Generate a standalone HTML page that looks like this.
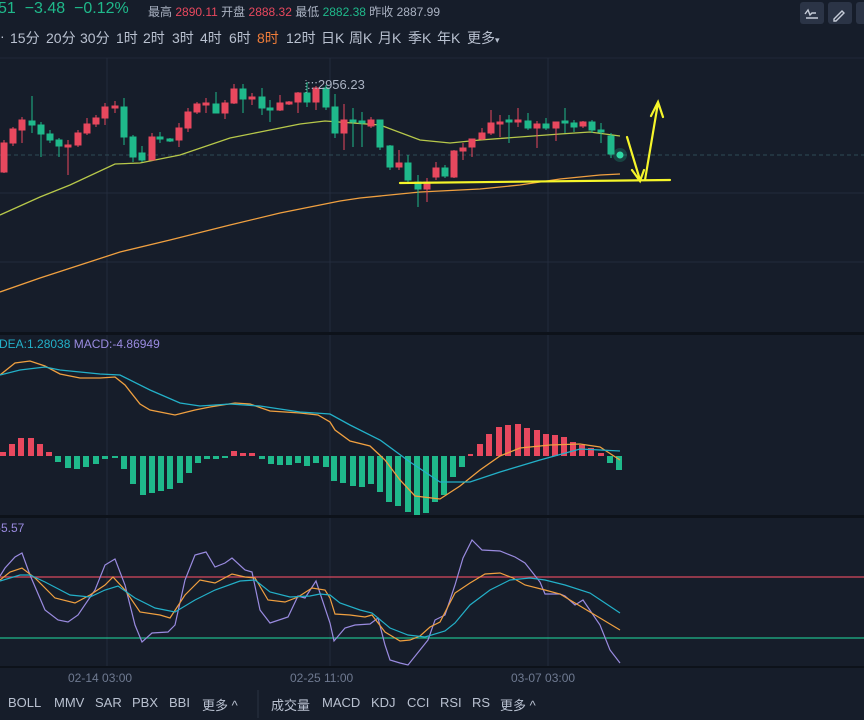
<!DOCTYPE html>
<html><head><meta charset="utf-8"><style>
body{margin:0;width:864px;height:720px;overflow:hidden;background:#161d2a;font-family:"Liberation Sans","Noto Sans CJK SC",sans-serif;position:relative}
.t{position:absolute;white-space:nowrap}
.btn{position:absolute;top:2px;width:24px;height:22px;background:#2b3446;border-radius:3px}
</style></head><body>
<div class="t" style="left:-2px;top:0;font-size:16px;color:#1fb98b">51 &nbsp;−3.48 &nbsp;−0.12%</div>
<div class="t" style="left:148px;top:3px;font-size:12px;color:#aab2c2">最高 <span style="color:#e8485e">2890.11</span> 开盘 <span style="color:#e8485e">2888.32</span> 最低 <span style="color:#1fb98b">2882.38</span> 昨收 2887.99</div>
<div class="t" style="left:0;top:28px;font-size:14px;color:#b9c1d0;word-spacing:0">
<span style="position:absolute;left:0">·</span><span style="position:absolute;left:10px">15分</span><span style="position:absolute;left:46px">20分</span><span style="position:absolute;left:80px">30分</span><span style="position:absolute;left:116px">1时</span><span style="position:absolute;left:143px">2时</span><span style="position:absolute;left:172px">3时</span><span style="position:absolute;left:200px">4时</span><span style="position:absolute;left:229px">6时</span><span style="position:absolute;left:257px;color:#f07d3a">8时</span><span style="position:absolute;left:286px">12时</span><span style="position:absolute;left:321px">日K</span><span style="position:absolute;left:349px">周K</span><span style="position:absolute;left:378px">月K</span><span style="position:absolute;left:408px">季K</span><span style="position:absolute;left:437px">年K</span><span style="position:absolute;left:467px">更多<small style="font-size:9px">▾</small></span></div>
<div class="btn" style="left:800px"></div><div class="btn" style="left:828px"></div><div class="btn" style="left:856px"></div>
<svg style="position:absolute;left:0;top:0" width="864" height="720">
<g stroke="#c6ccd8" stroke-width="1.4" fill="none"><path d="M805 14l3-4 2 5 2-2h4M806 18h12"/><path d="M834 19l8-8 2 2-8 8h-2z"/></g>
<line x1="0" y1="58" x2="864" y2="58" stroke="#202838"/>
<g stroke="#232c3c" stroke-width="1"><line x1="107" y1="58" x2="107" y2="666"/><line x1="330" y1="58" x2="330" y2="666"/><line x1="548" y1="58" x2="548" y2="666"/><line x1="0" y1="193" x2="864" y2="193"/><line x1="0" y1="262" x2="864" y2="262"/></g>
<line x1="0" y1="155" x2="864" y2="155" stroke="#2f4a55" stroke-dasharray="4 3"/>
<rect x="0" y="332" width="864" height="3" fill="#0d121a"/>
<rect x="0" y="515" width="864" height="3" fill="#0d121a"/>
<line x1="0" y1="667" x2="864" y2="667" stroke="#0d121a" stroke-width="2"/>
<rect x="0" y="688" width="864" height="32" fill="#161d2a"/>
<line x1="258" y1="690" x2="258" y2="718" stroke="#2a3242"/>
<path d="M0 215L40 197L70 185L115 164L140 163L180 155L230 138L260 132L300 124L325 121L380 125L420 140L450 143L480 140L560 134L590 132L620 136" stroke="#b7c84a" stroke-width="1.3" fill="none"/>
<path d="M0 292L40 278L80 265L120 252L170 240L230 225L280 213L320 205L340 201L360 198L420 192L480 189L520 185L560 179L600 175L620 174" stroke="#f0a040" stroke-width="1.3" fill="none"/>
<g id="c"></g>
<g stroke-width="1">
<g stroke="#e8485e" fill="#e8485e">
<line x1="4" y1="140" x2="4" y2="173"/><rect x="1" y="143" width="6" height="29"/>
<line x1="13" y1="127" x2="13" y2="146"/><rect x="10" y="129" width="6" height="14"/>
<line x1="22" y1="117" x2="22" y2="143"/><rect x="19" y="120" width="6" height="10"/>
<line x1="68" y1="140" x2="68" y2="175"/><rect x="65" y="145" width="6" height="2"/>
<line x1="78" y1="130" x2="78" y2="147"/><rect x="75" y="133" width="6" height="12"/>
<line x1="87" y1="118" x2="87" y2="135"/><rect x="84" y="124" width="6" height="9"/>
<line x1="96" y1="115" x2="96" y2="127"/><rect x="93" y="118" width="6" height="6"/>
<line x1="105" y1="103" x2="105" y2="125"/><rect x="102" y="107" width="6" height="11"/>
<line x1="115" y1="101" x2="115" y2="113"/><rect x="112" y="106" width="6" height="2"/>
<line x1="152" y1="133" x2="152" y2="160"/><rect x="149" y="137" width="6" height="23"/>
<line x1="179" y1="123" x2="179" y2="147"/><rect x="176" y="128" width="6" height="12"/>
<line x1="188" y1="108" x2="188" y2="132"/><rect x="185" y="112" width="6" height="16"/>
<line x1="197" y1="102" x2="197" y2="114"/><rect x="194" y="104" width="6" height="8"/>
<line x1="206" y1="98" x2="206" y2="113"/><rect x="203" y="103" width="6" height="2"/>
<line x1="225" y1="100" x2="225" y2="119"/><rect x="222" y="103" width="6" height="10"/>
<line x1="234" y1="84" x2="234" y2="104"/><rect x="231" y="89" width="6" height="14"/>
<line x1="252" y1="93" x2="252" y2="105"/><rect x="249" y="97" width="6" height="2"/>
<line x1="280" y1="95" x2="280" y2="111"/><rect x="277" y="103" width="6" height="7"/>
<line x1="289" y1="101" x2="289" y2="105"/><rect x="286" y="102" width="6" height="2"/>
<line x1="298" y1="92" x2="298" y2="113"/><rect x="295" y="93" width="6" height="9"/>
<line x1="316" y1="86" x2="316" y2="110"/><rect x="313" y="88" width="6" height="14"/>
<line x1="344" y1="104" x2="344" y2="150"/><rect x="341" y="120" width="6" height="13"/>
<line x1="371" y1="117" x2="371" y2="128"/><rect x="368" y="120" width="6" height="6"/>
<line x1="399" y1="150" x2="399" y2="170"/><rect x="396" y="163" width="6" height="4"/>
<line x1="427" y1="178" x2="427" y2="202"/><rect x="424" y="182" width="6" height="7"/>
<line x1="436" y1="162" x2="436" y2="180"/><rect x="433" y="168" width="6" height="9"/>
<line x1="454" y1="150" x2="454" y2="178"/><rect x="451" y="151" width="6" height="26"/>
<line x1="463" y1="143" x2="463" y2="160"/><rect x="460" y="148" width="6" height="3"/>
<line x1="472" y1="139" x2="472" y2="157"/><rect x="469" y="139" width="6" height="8"/>
<line x1="482" y1="128" x2="482" y2="140"/><rect x="479" y="133" width="6" height="6"/>
<line x1="491" y1="110" x2="491" y2="135"/><rect x="488" y="123" width="6" height="10"/>
<line x1="500" y1="115" x2="500" y2="137"/><rect x="497" y="122" width="6" height="2"/>
<line x1="518" y1="108" x2="518" y2="127"/><rect x="515" y="120" width="6" height="2"/>
<line x1="537" y1="121" x2="537" y2="148"/><rect x="534" y="124" width="6" height="4"/>
<line x1="556" y1="122" x2="556" y2="141"/><rect x="553" y="122" width="6" height="6"/>
<line x1="583" y1="121" x2="583" y2="128"/><rect x="580" y="122" width="6" height="4"/>
</g>
<g stroke="#1fb98b" fill="#1fb98b">
<line x1="32" y1="96" x2="32" y2="133"/><rect x="29" y="121" width="6" height="4"/>
<line x1="41" y1="122" x2="41" y2="157"/><rect x="38" y="125" width="6" height="9"/>
<line x1="50" y1="130" x2="50" y2="143"/><rect x="47" y="134" width="6" height="6"/>
<line x1="59" y1="138" x2="59" y2="157"/><rect x="56" y="140" width="6" height="6"/>
<line x1="124" y1="98" x2="124" y2="145"/><rect x="121" y="107" width="6" height="30"/>
<line x1="133" y1="135" x2="133" y2="162"/><rect x="130" y="137" width="6" height="20"/>
<line x1="142" y1="146" x2="142" y2="162"/><rect x="139" y="153" width="6" height="7"/>
<line x1="160" y1="132" x2="160" y2="143"/><rect x="157" y="137" width="6" height="2"/>
<line x1="170" y1="138" x2="170" y2="142"/><rect x="167" y="139" width="6" height="2"/>
<line x1="216" y1="92" x2="216" y2="113"/><rect x="213" y="104" width="6" height="9"/>
<line x1="243" y1="84" x2="243" y2="113"/><rect x="240" y="89" width="6" height="10"/>
<line x1="262" y1="88" x2="262" y2="115"/><rect x="259" y="97" width="6" height="11"/>
<line x1="270" y1="100" x2="270" y2="122"/><rect x="267" y="108" width="6" height="2"/>
<line x1="307" y1="82" x2="307" y2="107"/><rect x="304" y="93" width="6" height="9"/>
<line x1="326" y1="85" x2="326" y2="110"/><rect x="323" y="88" width="6" height="19"/>
<line x1="335" y1="94" x2="335" y2="138"/><rect x="332" y="107" width="6" height="26"/>
<line x1="353" y1="108" x2="353" y2="147"/><rect x="350" y="120" width="6" height="2"/>
<line x1="362" y1="112" x2="362" y2="147"/><rect x="359" y="121" width="6" height="2"/>
<line x1="380" y1="120" x2="380" y2="150"/><rect x="377" y="120" width="6" height="27"/>
<line x1="390" y1="145" x2="390" y2="170"/><rect x="387" y="146" width="6" height="21"/>
<line x1="408" y1="155" x2="408" y2="182"/><rect x="405" y="163" width="6" height="17"/>
<line x1="418" y1="175" x2="418" y2="207"/><rect x="415" y="182" width="6" height="7"/>
<line x1="445" y1="165" x2="445" y2="178"/><rect x="442" y="168" width="6" height="8"/>
<line x1="509" y1="115" x2="509" y2="143"/><rect x="506" y="120" width="6" height="2"/>
<line x1="528" y1="113" x2="528" y2="130"/><rect x="525" y="121" width="6" height="7"/>
<line x1="546" y1="118" x2="546" y2="130"/><rect x="543" y="124" width="6" height="4"/>
<line x1="565" y1="108" x2="565" y2="133"/><rect x="562" y="121" width="6" height="2"/>
<line x1="574" y1="120" x2="574" y2="132"/><rect x="571" y="123" width="6" height="4"/>
<line x1="592" y1="120" x2="592" y2="133"/><rect x="589" y="122" width="6" height="8"/>
<line x1="601" y1="123" x2="601" y2="143"/><rect x="598" y="130" width="6" height="2"/>
<line x1="611" y1="133" x2="611" y2="158"/><rect x="608" y="136" width="6" height="18"/>
</g></g>
<circle cx="620" cy="155" r="7" fill="#1fb98b" opacity="0.25"/><circle cx="620" cy="155" r="3.5" fill="#2fd8a4"/>
<line x1="306" y1="80" x2="306" y2="93" stroke="#aab" stroke-dasharray="1 2"/>
<text x="307" y="89" font-size="13" fill="#aab2c2" font-family="Liberation Sans">:::2956.23</text>
<g stroke="#f5f52a" stroke-width="2.2" fill="none" stroke-linecap="round">
<line x1="400" y1="183" x2="670" y2="180"/>
<path d="M627 137L640 180M632 170L640 181L644 170"/>
<path d="M645 180L658 103M651 116L658 102L663 117"/>
</g>
<text x="-1" y="348" font-size="12" fill="#23b0c8" font-family="Liberation Sans">DEA:1.28038 <tspan fill="#9a8be0">MACD:-4.86949</tspan></text>
<g fill="#e8485e">
<rect x="0" y="452" width="6" height="4"/><rect x="9" y="444" width="6" height="12"/><rect x="18" y="438" width="6" height="18"/><rect x="28" y="438" width="6" height="18"/><rect x="37" y="444" width="6" height="12"/><rect x="46" y="452" width="6" height="4"/>
<rect x="231" y="451" width="6" height="5"/><rect x="240" y="453" width="6" height="3"/><rect x="249" y="453" width="6" height="3"/>
<rect x="468" y="454" width="5" height="2"/><rect x="477" y="444" width="6" height="12"/><rect x="486" y="434" width="6" height="22"/><rect x="496" y="427" width="6" height="29"/><rect x="505" y="425" width="6" height="31"/><rect x="515" y="424" width="6" height="32"/><rect x="524" y="428" width="6" height="28"/><rect x="534" y="430" width="6" height="26"/><rect x="543" y="434" width="6" height="22"/><rect x="552" y="435" width="6" height="21"/><rect x="561" y="437" width="6" height="19"/><rect x="570" y="442" width="6" height="14"/><rect x="579" y="445" width="6" height="11"/><rect x="588" y="448" width="6" height="8"/><rect x="598" y="453" width="6" height="3"/>
</g>
<g fill="#1fb98b">
<rect x="55" y="456" width="6" height="6"/><rect x="65" y="456" width="6" height="12"/><rect x="74" y="456" width="6" height="13"/><rect x="83" y="456" width="6" height="11"/><rect x="93" y="456" width="6" height="8"/><rect x="102" y="456" width="6" height="3"/><rect x="112" y="456" width="6" height="2"/><rect x="121" y="456" width="6" height="13"/><rect x="130" y="456" width="6" height="28"/><rect x="140" y="456" width="6" height="39"/><rect x="149" y="456" width="6" height="37"/><rect x="158" y="456" width="6" height="35"/><rect x="167" y="456" width="6" height="33"/><rect x="177" y="456" width="6" height="27"/><rect x="186" y="456" width="6" height="17"/><rect x="195" y="456" width="6" height="7"/><rect x="204" y="456" width="6" height="3"/><rect x="213" y="456" width="6" height="3"/><rect x="222" y="456" width="6" height="2"/>
<rect x="259" y="456" width="6" height="3"/><rect x="268" y="456" width="6" height="8"/><rect x="277" y="456" width="6" height="9"/><rect x="286" y="456" width="6" height="9"/><rect x="295" y="456" width="6" height="7"/><rect x="304" y="456" width="6" height="10"/><rect x="313" y="456" width="6" height="7"/><rect x="323" y="456" width="6" height="11"/><rect x="331" y="456" width="6" height="25"/><rect x="340" y="456" width="6" height="27"/><rect x="350" y="456" width="6" height="30"/><rect x="359" y="456" width="6" height="31"/><rect x="368" y="456" width="6" height="28"/><rect x="377" y="456" width="6" height="36"/><rect x="386" y="456" width="6" height="46"/><rect x="395" y="456" width="6" height="50"/><rect x="405" y="456" width="6" height="56"/><rect x="414" y="456" width="6" height="59"/><rect x="423" y="456" width="6" height="57"/><rect x="432" y="456" width="6" height="46"/><rect x="441" y="456" width="6" height="39"/><rect x="450" y="456" width="6" height="21"/><rect x="459" y="456" width="6" height="11"/>
<rect x="607" y="456" width="6" height="7"/><rect x="616" y="456" width="6" height="14"/>
</g>
<path d="M0 375L15 363L30 361L45 366L60 374L80 378L100 378L115 377L125 385L140 404L150 410L175 415L195 410L210 407L235 403L250 404L270 411L300 413L318 415L330 422L335 430L350 441L370 446L385 460L400 480L415 496L440 499L460 486L480 470L500 456L520 448L550 445L580 444L600 447L620 460" stroke="#f0a040" stroke-width="1.3" fill="none"/>
<path d="M0 375L20 370L45 367L60 370L100 374L120 375L150 390L180 403L200 406L230 404L260 406L300 412L330 414L350 425L380 440L410 462L440 482L470 482L500 472L540 460L580 449L620 451" stroke="#23b0c8" stroke-width="1.3" fill="none"/>
<text x="-3" y="532" font-size="12" fill="#9a8be0" font-family="Liberation Sans">-5.57</text>
<line x1="0" y1="577" x2="864" y2="577" stroke="#d8485e" stroke-width="1.3"/>
<line x1="0" y1="638" x2="864" y2="638" stroke="#1fb98b" stroke-width="1.3"/>
<path d="M0 576L5 568L15 557L22 553L30 575L45 610L58 620L68 622L78 615L95 590L105 565L115 559L125 585L135 625L142 642L152 633L168 632L175 625L185 580L195 555L206 552L215 567L225 563L232 558L245 570L252 572L260 610L270 623L288 617L298 596L305 598L316 581L330 623L334 641L345 628L355 625L370 624L378 618L385 645L390 660L400 663L408 665L420 650L428 640L435 620L445 615L455 585L463 558L472 540L482 550L500 551L515 557L525 563L540 582L545 594L560 594L565 596L575 605L583 600L600 625L610 650L620 663" stroke="#9a8be0" stroke-width="1.2" fill="none"/>
<path d="M0 580L10 572L22 568L35 578L55 598L75 603L90 595L105 585L113 577L125 590L140 612L160 615L170 618L185 595L200 580L215 583L232 574L245 577L255 578L268 600L285 602L298 597L312 588L325 590L330 598L335 614L350 615L365 617L372 615L385 632L400 641L410 640L420 636L430 627L440 622L455 593L470 583L485 574L500 573L513 578L525 585L545 590L560 594L575 603L600 618L620 630" stroke="#f0a040" stroke-width="1.2" fill="none"/>
<path d="M0 581L20 575L30 575L45 582L70 595L90 597L105 590L118 586L135 598L155 608L175 612L195 600L215 590L240 581L255 580L270 592L290 597L310 596L320 594L330 595L340 603L360 610L372 613L390 628L408 635L425 637L445 631L455 623L470 605L490 590L510 580L530 578L545 580L565 585L590 593L605 603L620 613" stroke="#23b0c8" stroke-width="1.2" fill="none"/>
<g font-size="12" fill="#6f7a91" font-family="Liberation Sans"><text x="68" y="682">02-14 03:00</text><text x="290" y="682">02-25 11:00</text><text x="511" y="682">03-07 03:00</text></g>
</svg>
<div class="t" style="left:8px;top:695px;font-size:13px;color:#b9c1d0">
<span style="position:absolute;left:0">BOLL</span><span style="position:absolute;left:46px">MMV</span><span style="position:absolute;left:87px">SAR</span><span style="position:absolute;left:124px">PBX</span><span style="position:absolute;left:161px">BBI</span><span style="position:absolute;left:194px">更多 ^</span><span style="position:absolute;left:263px">成交量</span><span style="position:absolute;left:314px">MACD</span><span style="position:absolute;left:363px">KDJ</span><span style="position:absolute;left:399px">CCI</span><span style="position:absolute;left:432px">RSI</span><span style="position:absolute;left:464px">RS</span><span style="position:absolute;left:492px">更多 ^</span></div>
</body></html>
